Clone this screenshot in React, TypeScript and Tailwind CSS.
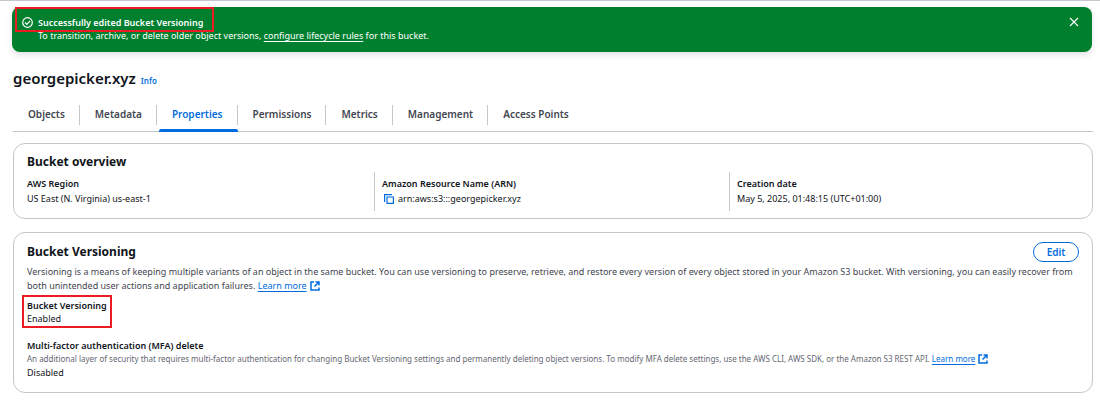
import React from "react";

const tabs = ["Objects", "Metadata", "Properties", "Permissions", "Metrics", "Management", "Access Points"];

function ExternalIcon() {
  return (
    <svg className="ml-px inline-block size-[10px] align-[-2px]" viewBox="0 0 10 10" fill="none" stroke="currentColor" strokeWidth="1.5" aria-hidden="true">
      <path d="M4 1H1v8h8V6.5" />
      <path d="M5.5 1H9v3.5M9 1 4.5 5.5" />
    </svg>
  );
}

function LearnMore() {
  return (
    <a href="#learn-more" className="whitespace-nowrap text-[#006ce0]">
      <span className="pr-[2px] underline underline-offset-2">Learn more</span>
      <ExternalIcon />
    </a>
  );
}

function Field({ label, children, divided = false }: { label: string; children: React.ReactNode; divided?: boolean }) {
  return (
    <div className={"pt-1 pb-[6px] " + (divided ? "-ml-2 border-l border-[#c6c6cd] pl-[7px]" : "")}>
      <dt className="text-[9px] leading-4 font-semibold">{label}</dt>
      <dd className="flex items-center text-[9px] leading-[13px]">{children}</dd>
    </div>
  );
}

export default function App() {
  return (
    <main className="border-t border-[#c6c6cd] bg-white pr-[7px] pl-[13px] font-['Noto_Sans','Open_Sans',sans-serif] text-[#0f141a]">
      <section role="status" className="relative mt-[6px] mr-px -ml-px flex h-[45px] items-start rounded-lg bg-[#00802f] pt-[9px] pr-3 pl-[10px] text-white shadow-[0_3px_6px_rgba(0,7,22,0.12)]">
        <svg className="mt-px mr-[5px] size-[11px] shrink-0" viewBox="0 0 11 11" fill="none" stroke="currentColor" strokeWidth="1.2" aria-hidden="true">
          <circle cx="5.5" cy="5.5" r="4.8" />
          <path d="m3 5.5 1.8 1.8L8 4" />
        </svg>
        <div className="text-[9px] leading-[13px]">
          <p className="font-semibold">Successfully edited Bucket Versioning</p>
          <p>To transition, archive, or delete older object versions, <a href="#lifecycle" className="underline underline-offset-2">configure lifecycle rules</a> for this bucket.</p>
        </div>
        <button type="button" aria-label="Dismiss" className="ml-auto p-px">
          <svg className="size-[10px]" viewBox="0 0 10 10" stroke="currentColor" strokeWidth="1.1" aria-hidden="true"><path d="m1 1 8 8M9 1 1 9" /></svg>
        </button>
        <div className="pointer-events-none absolute top-0 left-[3px] h-[25px] w-[199px] border-2 border-[#ed1c24]" />
      </section>

      <header className="mt-4 flex items-baseline gap-[5px]">
        <h1 className="text-[15px] leading-5 font-semibold">georgepicker.xyz</h1>
        <a href="#info" className="text-[8px] font-semibold text-[#006ce0]">Info</a>
      </header>

      <nav className="mt-[13px] flex border-b border-[#c6c6cd] pt-1">
        {tabs.map((tab, i) => (
          <a key={tab} href={"#" + tab} className={"relative pb-[6px] text-[10px] leading-[18px] font-semibold " + (tab === "Properties" ? "text-[#006ce0]" : "text-[#424650]")}>
            <span className={"block pr-[14px] pb-[2px] pl-[15px] " + (i < tabs.length - 1 ? "border-r border-[#c6c6cd]" : "")}>{tab}</span>
            {tab === "Properties" && <span className="absolute right-0 -bottom-px left-[2px] h-[3px] rounded-t-xs bg-[#006ce0]" />}
          </a>
        ))}
      </nav>

      <section className="mt-[11px] rounded-xl border border-[#c6c6cd] px-[13px] pt-2 pb-[7px]">
        <h2 className="text-[12px] leading-5 font-bold">Bucket overview</h2>
        <dl className="grid grid-cols-3 gap-[13px]">
          <Field label="AWS Region">US East (N. Virginia) us-east-1</Field>
          <Field label="Amazon Resource Name (ARN)" divided>
            <button type="button" aria-label="Copy ARN" className="mr-1 ml-[2px] text-[#006ce0]">
              <svg className="size-[10px]" viewBox="0 0 10 10" fill="none" stroke="currentColor" strokeWidth="1.2" aria-hidden="true">
                <path d="M.6 8V.6H8M3 3h6.4v6.4H3z" />
              </svg>
            </button>
            arn:aws:s3:::georgepicker.xyz
          </Field>
          <Field label="Creation date" divided>May 5, 2025, 01:48:15 (UTC+01:00)</Field>
        </dl>
      </section>

      <section className="mt-[13px] rounded-xl border border-[#c6c6cd] px-[13px] pt-[9px] pb-[13px]">
        <div className="flex items-center justify-between">
          <h2 className="text-[12px] leading-5 font-bold">Bucket Versioning</h2>
          <button type="button" className="h-5 w-[46px] rounded-full border border-[#006ce0] text-[10px] leading-4 font-semibold text-[#006ce0]">Edit</button>
        </div>
        <p className="mt-[3px] text-[9px] leading-[14px] text-[#424650]">
          Versioning is a means of keeping multiple variants of an object in the same bucket. You can use versioning to preserve, retrieve, and restore every version of every object stored in your Amazon S3 bucket. With versioning, you can easily recover from both unintended user actions and application failures. <LearnMore />
        </p>
        <div className="relative mt-[6px] w-fit text-[9px] leading-[13px]">
          <h3 className="font-semibold">Bucket Versioning</h3>
          <p>Enabled</p>
          <div className="pointer-events-none absolute -top-1 -left-[5px] h-[33px] w-[90px] border-2 border-[#ed1c24]" />
        </div>
        <div className="mt-[14px] text-[9px] leading-[13px]">
          <h3 className="font-semibold">Multi-factor authentication (MFA) delete</h3>
          <p className="text-[8px] leading-[14px] text-[#656871]">
            An additional layer of security that requires multi-factor authentication for changing Bucket Versioning settings and permanently deleting object versions. To modify MFA delete settings, use the AWS CLI, AWS SDK, or the Amazon S3 REST API. <LearnMore />
          </p>
          <p>Disabled</p>
        </div>
      </section>
    </main>
  );
}
